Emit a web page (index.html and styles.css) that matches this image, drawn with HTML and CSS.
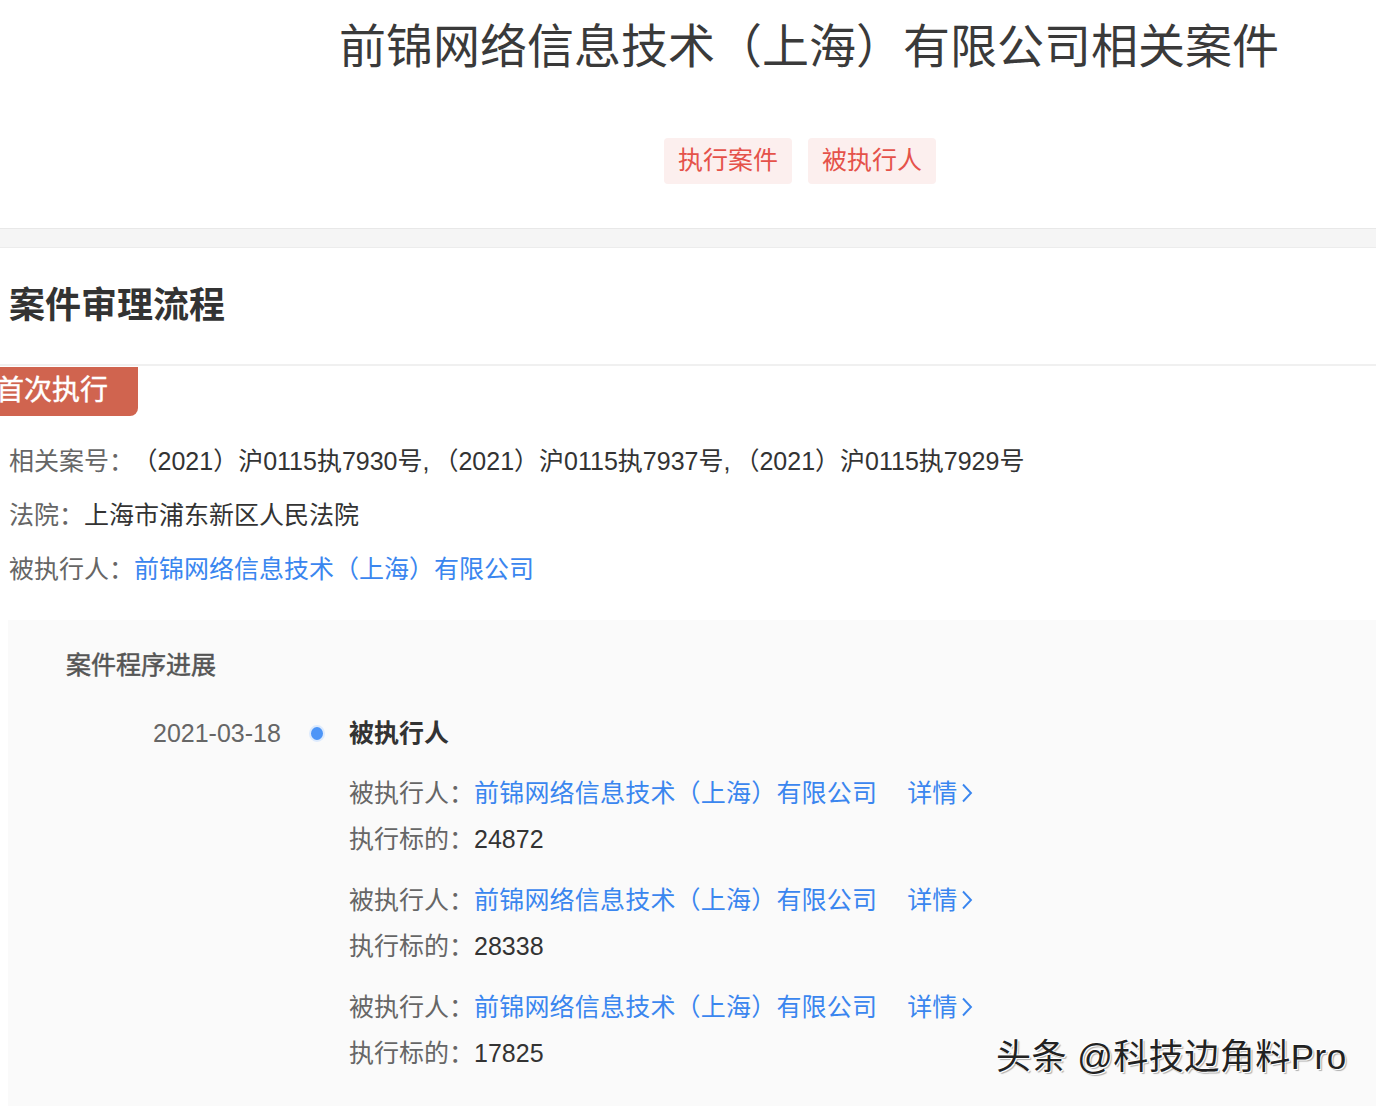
FILE: index.html
```html
<!DOCTYPE html>
<html lang="zh-CN">
<head>
<meta charset="utf-8">
<title>前锦网络信息技术（上海）有限公司相关案件</title>
<link rel="stylesheet" href="styles.css">
</head>
<body>
<div class="page">
  <header class="header">
    <h1 class="title">前锦网络信息技术（上海）有限公司相关案件</h1>
    <div class="tags">
      <span class="tag">执行案件</span>
      <span class="tag">被执行人</span>
    </div>
  </header>
  <div class="band"></div>
  <section class="section">
    <h2 class="section-title">案件审理流程</h2>
    <div class="badge">首次执行</div>
    <div class="fields">
      <div class="field"><span class="label">相关案号：</span><span class="value cases">（2021）沪0115执7930号<span class="sep">,</span>（2021）沪0115执7937号<span class="sep">,</span>（2021）沪0115执7929号</span></div>
      <div class="field"><span class="label">法院：</span><span class="value">上海市浦东新区人民法院</span></div>
      <div class="field"><span class="label">被执行人：</span><span class="link">前锦网络信息技术（上海）有限公司</span></div>
    </div>
    <div class="panel">
      <div class="panel-title">案件程序进展</div>
      <div class="timeline">
        <div class="date">2021-03-18</div>
        <div class="dot-col"><span class="dot"></span></div>
        <div class="entry">
          <div class="entry-title">被执行人</div>
          <div class="group">
            <div class="row"><span class="label">被执行人：</span><span class="link">前锦网络信息技术（上海）有限公司</span><span class="detail">详情<svg class="chev" width="14" height="24" viewBox="0 0 14 24"><path d="M3 3.5 L11 12 L3 20.5" fill="none" stroke="currentColor" stroke-width="1.9"/></svg></span></div>
            <div class="row"><span class="label">执行标的：</span><span class="value">24872</span></div>
          </div>
          <div class="group">
            <div class="row"><span class="label">被执行人：</span><span class="link">前锦网络信息技术（上海）有限公司</span><span class="detail">详情<svg class="chev" width="14" height="24" viewBox="0 0 14 24"><path d="M3 3.5 L11 12 L3 20.5" fill="none" stroke="currentColor" stroke-width="1.9"/></svg></span></div>
            <div class="row"><span class="label">执行标的：</span><span class="value">28338</span></div>
          </div>
          <div class="group">
            <div class="row"><span class="label">被执行人：</span><span class="link">前锦网络信息技术（上海）有限公司</span><span class="detail">详情<svg class="chev" width="14" height="24" viewBox="0 0 14 24"><path d="M3 3.5 L11 12 L3 20.5" fill="none" stroke="currentColor" stroke-width="1.9"/></svg></span></div>
            <div class="row"><span class="label">执行标的：</span><span class="value">17825</span></div>
          </div>
        </div>
      </div>
    </div>
  </section>
  <div class="watermark">头条 @科技边角料Pro</div>
</div>
</body>
</html>
```
FILE: styles.css
```css
html, body {
  margin: 0;
  padding: 0;
  background: #fff;
}
body {
  font-family: "Liberation Sans", "Noto Sans CJK SC", sans-serif;
  color: #333;
  width: 1376px;
  height: 1106px;
  overflow: hidden;
}
.page {
  position: relative;
  height: 1106px;
  display: flex;
  flex-direction: column;
}
.header {
  padding-top: 14px;
}
.title {
  margin: 0;
  padding-left: 339px;
  font-size: 47px;
  line-height: 66px;
  font-weight: 400;
  color: #3a3a3a;
  white-space: nowrap;
}
.tags {
  display: flex;
  gap: 16px;
  margin-top: 58px;
  padding-left: 664px;
}
.tag {
  display: inline-block;
  height: 46px;
  line-height: 44px;
  padding: 0 14px;
  font-size: 25px;
  color: #e5524a;
  background: #fcefee;
  border-radius: 4px;
}
.band {
  margin-top: 44px;
  height: 18px;
  background: #f5f5f5;
  border-top: 1px solid #e8e8e8;
  border-bottom: 1px solid #ececec;
}
.section {
  flex: 1;
  display: flex;
  flex-direction: column;
}
.section-title {
  margin: 0;
  height: 116px;
  line-height: 116px;
  padding-left: 9px;
  font-size: 36px;
  font-weight: 700;
  color: #333;
  border-bottom: 2px solid #f0f0f0;
}
.badge {
  align-self: flex-start;
  margin-top: 1px;
  margin-left: -16px;
  padding: 0 30px 0 12px;
  height: 49px;
  line-height: 47px;
  font-size: 28px;
  color: #fff;
  background: #d0644f;
  border-radius: 0 0 8px 0;
  -webkit-text-stroke: 0.4px #fff;
}
.fields {
  margin-top: 18px;
  padding-left: 9px;
}
.field {
  font-size: 25px;
  line-height: 54px;
  white-space: nowrap;
}
.label {
  color: #666;
}
.value {
  color: #333;
}
.cases {
  margin-left: 11px;
}
.sep {
  margin-right: 4px;
}
.link {
  color: #3a86ef;
}
.panel {
  flex: 1;
  margin-top: 24px;
  margin-left: 8px;
  background: #fafafa;
  padding-top: 18px;
}
.panel-title {
  padding-left: 58px;
  font-size: 25px;
  line-height: 54px;
  color: #555;
  -webkit-text-stroke: 0.5px #555;
}
.timeline {
  display: flex;
  margin-top: 18px;
  padding-left: 145px;
}
.date {
  width: 128px;
  font-size: 25px;
  line-height: 46px;
  color: #666;
}
.dot-col {
  width: 16px;
  margin-left: 28px;
  height: 46px;
  display: flex;
  align-items: center;
}
.dot {
  width: 13px;
  height: 13px;
  border-radius: 50%;
  background: #4d95f7;
  border: 2px solid #dceafd;
}
.entry {
  margin-left: 24px;
}
.entry-title {
  font-size: 25px;
  line-height: 46px;
  font-weight: 700;
  color: #333;
}
.group {
  margin-top: 14px;
}
.group + .group {
  margin-top: 15px;
}
.row {
  font-size: 25px;
  line-height: 46px;
  white-space: nowrap;
  display: flex;
  align-items: center;
}
.row .link {
  letter-spacing: 0.2px;
}
.detail {
  margin-left: 30px;
  color: #3a86ef;
  display: inline-flex;
  align-items: center;
}
.chev {
  margin-left: 3px;
}
.watermark {
  position: absolute;
  left: 996px;
  top: 1034px;
  font-size: 35px;
  line-height: 46px;
  letter-spacing: 0.5px;
  color: #222;
  white-space: nowrap;
  text-shadow: -1px -1px 0 #fff, 1px 1px 0 #fff, 2px 2px 1px rgba(0,0,0,0.3);
}
```
